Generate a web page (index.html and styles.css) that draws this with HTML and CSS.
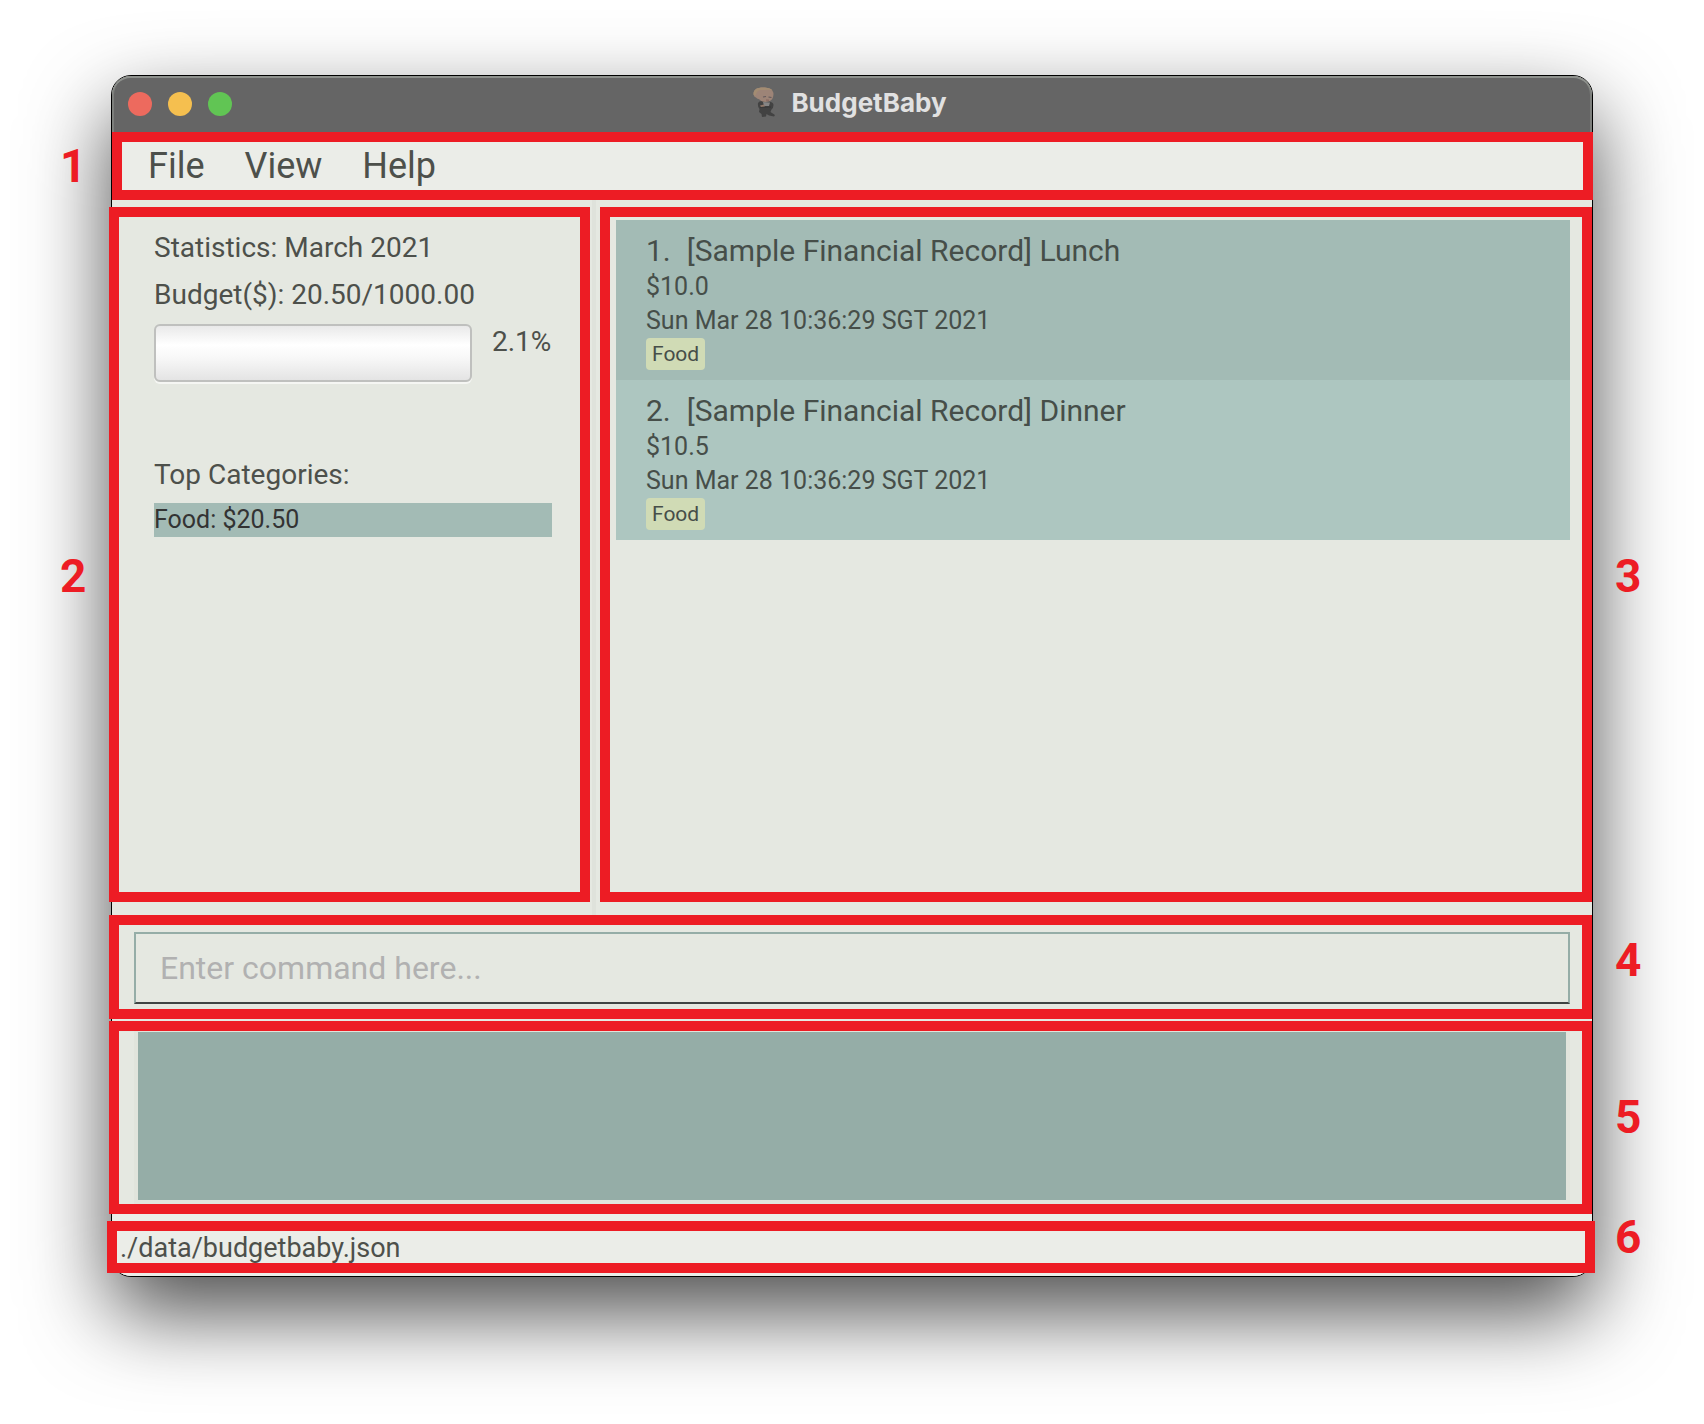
FILE: index.html
```
<!DOCTYPE html>
<html lang="en">
<head>
<meta charset="utf-8">
<meta name="viewport" content="width=device-width, initial-scale=1">
<title>BudgetBaby</title>
<link rel="stylesheet" href="styles.css">
</head>
<body>
<div class="window">
  <header class="titlebar">
    <div class="lights">
      <button class="light light-close" type="button" aria-label="Close"></button>
      <button class="light light-minimise" type="button" aria-label="Minimise"></button>
      <button class="light light-zoom" type="button" aria-label="Zoom"></button>
    </div>
    <svg class="app-icon" viewBox="0 0 22 30" width="22" height="30" aria-hidden="true">
      <path d="M5 16Q6 14 9 14L16 14.500Q20.500 15 20.500 18Q20.500 21 18.500 22.500L17.500 25L22 28L21 29.500L16 28.500L13.500 27L13 29.500L9 30L8.500 27L6 25L6.500 22Q4.500 20 5 16Z" fill="#424242"/>
      <path d="M.5 7C.5 2.500 4 .5 10 .5C16 .5 20 2.500 20.500 6.500C20.500 10 19.500 13.500 15.500 14.500C11 15.500 8 14.500 6.500 12.500C5 12 4 11.500 3 10.500C1.500 10 .5 8.500 .5 7Z" fill="#9d8477"/>
      <path d="M.5 7C.5 2.500 4 .5 10 .5C15 .5 18.500 1.500 19.500 3.500C15 2 11 3.500 7 3C4.500 3.500 3.500 5.500 2.500 8.500C1.300 8.500 .5 8 .5 7Z" fill="#a38c72"/>
      <path d="M10 10L13 9.500M15.500 10L18.500 10.500" stroke="#62595b" stroke-width="1.200"/>
      <path d="M13 13L16 13.200" stroke="#84605a" stroke-width="1"/>
      <path d="M10 15L17 15.500L16 19L11 19Z" fill="#858585"/>
      <path d="M7 18.500L11 17.500L12 19.500L8 20Z" fill="#92796a"/>
      <path d="M7 20.500L18 20" stroke="#393939" stroke-width="1"/>
    </svg>
    <h1 class="title">BudgetBaby</h1>
  </header>

  <nav class="menubar region" aria-label="Main menu">
    <button class="menu" type="button">File</button>
    <button class="menu" type="button">View</button>
    <button class="menu" type="button">Help</button>
    <span class="outline outline-menu"></span>
    <span class="number number-left">1</span>
  </nav>

  <main class="panes">
    <section class="stats region">
      <h2 class="line">Statistics: March 2021</h2>
      <label class="line" for="budget">Budget($): 20.50/1000.00</label>
      <div class="budget">
        <progress class="meter" id="budget" value="2.1" max="100"></progress>
        <span class="line percent">2.1%</span>
      </div>
      <h2 class="line">Top Categories:</h2>
      <ul class="categories">
        <li class="category">Food: $20.50</li>
      </ul>
      <span class="outline outline-stats"></span>
      <span class="number number-left number-low">2</span>
    </section>
    <div class="divider"></div>
    <section class="records region">
      <ol class="record-list">
        <li class="record">
          <h3 class="record-title"><span>1.</span><span>[Sample Financial Record] Lunch</span></h3>
          <p class="detail">$10.0</p>
          <p class="detail">Sun Mar 28 10:36:29 SGT 2021</p>
          <span class="tag">Food</span>
        </li>
        <li class="record">
          <h3 class="record-title"><span>2.</span><span>[Sample Financial Record] Dinner</span></h3>
          <p class="detail">$10.5</p>
          <p class="detail">Sun Mar 28 10:36:29 SGT 2021</p>
          <span class="tag">Food</span>
        </li>
      </ol>
      <span class="outline outline-records"></span>
      <span class="number number-right number-low">3</span>
    </section>
  </main>

  <form class="command region">
    <input class="command-box" type="text" aria-label="Command" placeholder="Enter command here...">
    <span class="outline outline-command"></span>
    <span class="number number-right number-high">4</span>
  </form>

  <section class="result region" aria-label="Result">
    <output class="result-box"></output>
    <span class="outline outline-result"></span>
    <span class="number number-right">5</span>
  </section>

  <footer class="status region">
    ./data/budgetbaby.json
    <span class="outline outline-status"></span>
    <span class="number number-right number-high">6</span>
  </footer>
</div>
</body>
</html>
```
FILE: styles.css
```
:root {
  --panel: #e5e8e1;
  --bar: #ebede8;
  --ink: #4d504b;
  --teal: #95ada7;
  --row-odd: #a3bbb5;
  --row-even: #adc6c0;
  --mark: #ed1c24;
}

* {
  box-sizing: border-box;
  margin: 0;
  padding: 0;
}

body {
  display: flex;
  min-height: 100vh;
  padding: 75px 111px 147px;
  background: #fff;
  color: var(--ink);
  font-family: Roboto, "Liberation Sans", sans-serif;
}

.window {
  display: flex;
  flex: 1;
  flex-direction: column;
  min-width: 0;
  border: 1px solid #000;
  border-radius: 20px;
  background: var(--panel);
  box-shadow: 0 36px 84px rgba(0, 0, 0, 0.7);
}

/* Title bar */
.titlebar {
  display: grid;
  grid-template-columns: 1fr auto auto 1fr;
  align-items: center;
  height: 56px;
  padding: 0 16px;
  border-radius: 19px 19px 0 0;
  background: #656565;
  box-shadow: inset 0 2px 0 #8e918d, inset 2px 0 0 #7d7f7c, inset -2px 0 0 #7d7f7c;
}

.lights {
  display: flex;
  gap: 16px;
}

.light {
  width: 24px;
  height: 24px;
  border: 0;
  border-radius: 50%;
}

.light-close { background: #ed6a5e; }
.light-minimise { background: #f5bf4f; }
.light-zoom { background: #61c554; }

.app-icon {
  margin-right: 16px;
  margin-bottom: 4px;
}

.title {
  padding: 0 4px 2px 0;
  color: #e1e1e1;
  font: bold 26px/32px Inter, "Liberation Sans", sans-serif;
}

/* Numbered outlines drawn over each region */
.region {
  position: relative;
}

.outline {
  position: absolute;
  border: 10px solid var(--mark);
  pointer-events: none;
}

.outline-menu { inset: 0 -1px 0 0; }
.outline-stats { inset: 7px 2px 13px -3px; }
.outline-records { inset: 7px 0 13px 4px; }
.outline-command { inset: 0 0 1px -3px; }
.outline-result { inset: 1px 0 0 -3px; }
.outline-status { inset: 7px -3px 3px -5px; }

.number {
  position: absolute;
  top: 50%;
  width: 24px;
  margin-top: -24px;
  color: var(--mark);
  font: bold 46px/48px Roboto, "Liberation Sans", sans-serif;
  text-align: center;
}

.number-left { left: -52px; }
.number-right { right: -47px; }
.number-low { margin-top: -6px; }
.number-high { margin-top: -32px; }

/* Menu bar */
.menubar {
  display: flex;
  gap: 40px;
  height: 68px;
  padding: 0 36px;
  background: var(--bar);
}

.menu {
  border: 0;
  background: none;
  color: inherit;
  font: 36px/68px Roboto, "Liberation Sans", sans-serif;
}

/* Statistics and records */
.panes {
  display: grid;
  flex: 1;
  grid-template-columns: minmax(0, 480fr) 4px minmax(0, 996fr);
}

.divider {
  background: #dfe2db;
}

.stats {
  display: flex;
  flex-direction: column;
  padding: 24px 40px 24px 42px;
}

.line {
  font-size: 28px;
  font-weight: 400;
  line-height: 47px;
}

.budget {
  display: flex;
  align-items: flex-start;
  gap: 20px;
  margin-bottom: 69px;
}

.percent {
  flex: none;
  width: 60px;
  overflow: hidden;
}

.meter {
  flex: 1;
  min-width: 0;
  height: 58px;
  margin-top: 6px;
  border: 2px solid #bfc0be;
  border-radius: 6px;
  background: linear-gradient(#e9e9e9, #fff 35%, #f7f7f7 60%, #e4e4e4);
  box-shadow: 0 2px 0 #f5f6f3;
  appearance: none;
}

.meter::-webkit-progress-bar,
.meter::-webkit-progress-value {
  background: transparent;
}

.categories {
  margin-top: 5px;
  list-style: none;
}

.category {
  background: var(--row-odd);
  color: #333;
  font-size: 25px;
  line-height: 34px;
}

.records {
  padding: 20px 22px 20px 20px;
}

.record-list {
  list-style: none;
}

.record {
  display: flex;
  flex-direction: column;
  align-items: flex-start;
  padding: 12px 30px 10px;
  background: var(--row-odd);
  color: #464e49;
}

.record:nth-child(even) {
  background: var(--row-even);
}

.record-title {
  display: flex;
  gap: 16px;
  font-size: 30px;
  font-weight: 400;
  line-height: 38px;
}

.detail {
  font-size: 25px;
  line-height: 34px;
}

.tag {
  padding: 0 6px;
  border-radius: 4px;
  background: #d0dbb5;
  font-size: 21px;
  line-height: 32px;
}

/* Command box */
.command {
  padding: 17px 22px 16px;
}

.command-box {
  display: block;
  width: 100%;
  height: 72px;
  padding: 0 24px;
  border: 2px solid var(--teal);
  border-bottom-color: #3f4443;
  outline: 0;
  background: transparent;
  color: var(--ink);
  font: 32px/68px Roboto, "Liberation Sans", sans-serif;
}

.command-box::placeholder {
  color: #b1b1b1;
}

/* Result display */
.result {
  padding: 8px 22px 10px;
}

.result-box {
  display: block;
  height: 176px;
  border: 4px solid #e1e4dc;
  background: var(--teal);
}

/* Status bar */
.status {
  padding: 17px 8px 11px;
  border-radius: 0 0 19px 19px;
  background: var(--bar);
  font-size: 27px;
  line-height: 34px;
}
```
